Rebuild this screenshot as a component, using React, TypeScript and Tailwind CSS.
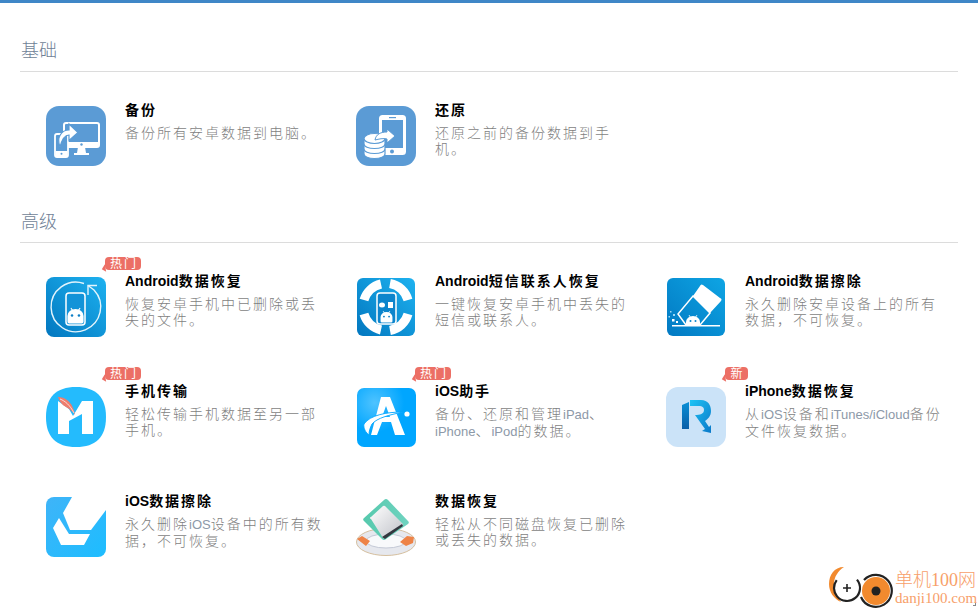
import React from "react";

const STACK = "font-['Liberation_Sans','Noto_Sans_CJK_SC',sans-serif]";

function Mixed({ text, latin, cjk }: { text: string; latin: string; cjk: string }) {
  const parts = text.match(/[A-Za-z/]+|[^A-Za-z/]+/g) ?? [];
  return (
    <>
      {parts.map((p, i) =>
        /^[A-Za-z/]/.test(p) ? (
          <span key={i} className={latin}>{p}</span>
        ) : (
          <span key={i} className={cjk}>{p}</span>
        )
      )}
    </>
  );
}

function Robot({ x, y, s = 1, eye = "#0d7fc6" }: { x: number; y: number; s?: number; eye?: string }) {
  return (
    <g transform={`translate(${x} ${y}) scale(${s})`} fill="#fff">
      <path d="M-7 0a7 6 0 0 1 14 0v5a1.500 1.500 0 0 1-1.500 1.500h-11A1.500 1.500 0 0 1-7 5z" />
      <path d="M-4-7l2 3M4-7l-2 3" stroke="#fff" strokeWidth="0.900" />
      <circle cx="-3" cy="-0.500" r="1.100" fill={eye} />
      <circle cx="3" cy="-0.500" r="1.100" fill={eye} />
    </g>
  );
}

const BackupIcon = () => (
  <svg width="60" height="60" viewBox="0 0 60 60">
    <rect width="60" height="60" rx="13" fill="#5b9bd5" />
    <rect x="18" y="17" width="35" height="24" rx="2" fill="none" stroke="#fff" strokeWidth="2" />
    <path d="M18 36h35v3a2 2 0 0 1-2 2H20a2 2 0 0 1-2-2z" fill="#fff" />
    <circle cx="35.500" cy="38.500" r="1.200" fill="#5b9bd5" />
    <path d="M32 41h7l1 6h3v2H28v-2h3z" fill="#fff" />
    <rect x="9" y="28" width="13" height="23" rx="2" fill="#5b9bd5" stroke="#fff" strokeWidth="1.800" />
    <path d="M9.500 45h12v4a1.500 1.500 0 0 1-1.500 1.500h-9A1.500 1.500 0 0 1 9.500 49z" fill="#fff" />
    <circle cx="15.500" cy="47.800" r="1" fill="#5b9bd5" />
    <path d="M14 41c-4-10 2-17 9-17v-6l9 8.500-9 8v-5.500c-4 0-7 4-9 12z" fill="#fff" stroke="#5b9bd5" strokeWidth="1.200" />
  </svg>
);

const RestoreIcon = () => (
  <svg width="60" height="60" viewBox="0 0 60 60">
    <rect width="60" height="60" rx="13" fill="#5b9bd5" />
    <rect x="23" y="9" width="27" height="40" rx="3.500" fill="#fff" />
    <rect x="26" y="14" width="21" height="28" fill="#5b9bd5" />
    <rect x="33" y="11" width="7" height="1.200" fill="#5b9bd5" />
    <circle cx="36" cy="45.500" r="2" fill="#5b9bd5" />
    <g fill="#fff" stroke="#5b9bd5" strokeWidth="1.200">
      <path d="M8 44v4c0 2.500 4.500 4.500 10.500 4.500S29 50.500 29 48v-4z" />
      <path d="M8 38v5c0 2.500 4.500 4.500 10.500 4.500S29 45.500 29 43v-5z" />
      <path d="M8 33v5c0 2.500 4.500 4.500 10.500 4.500S29 40.500 29 38v-5z" />
      <ellipse cx="18.500" cy="32.500" rx="10.500" ry="5" />
    </g>
    <path d="M19 34c1-6 6-8 12-8v-3l8 7-8 7v-4c-4-1-8 0-12 1z" fill="#fff" stroke="#5b9bd5" strokeWidth="1" />
  </svg>
);

const AndroidRecIcon = () => (
  <svg width="60" height="60" viewBox="0 0 60 60">
    <defs>
      <linearGradient id="ga" x1="1" y1="0" x2="0" y2="1">
        <stop offset="0" stopColor="#1eb2f0" />
        <stop offset="1" stopColor="#0277bf" />
      </linearGradient>
    </defs>
    <rect width="60" height="60" rx="8" fill="url(#ga)" />
    <path d="M38 6.500A24.800 24.800 0 1 0 48 13L42 8.500" fill="none" stroke="#e3f4fc" strokeWidth="1.400" />
    <path d="M42 18V8.500H51" fill="none" stroke="#e3f4fc" strokeWidth="1.400" />
    <rect x="20" y="16" width="19" height="32" rx="3" fill="#1293d8" stroke="#fff" strokeWidth="1.500" />
    <Robot x={29.500} y={39} s={1.150} />
  </svg>
);

const AndroidSmsIcon = () => (
  <svg width="58" height="58" viewBox="0 0 58 58">
    <defs>
      <linearGradient id="gb" x1="1" y1="0" x2="0" y2="1">
        <stop offset="0" stopColor="#1eb2f0" />
        <stop offset="1" stopColor="#0277bf" />
      </linearGradient>
    </defs>
    <rect width="58" height="58" rx="6" fill="url(#gb)" />
    <g fill="none" stroke="#fff" strokeWidth="9">
      <path d="M7 22A23 23 0 0 1 24 6" />
      <path d="M33 5.500A23 23 0 0 1 51 22" />
      <path d="M51 36A23 23 0 0 1 33 52.500" />
      <path d="M24 52A23 23 0 0 1 7 36" />
    </g>
    <rect x="20" y="15" width="19" height="31" rx="3" fill="#0d85cc" stroke="#fff" strokeWidth="1.500" />
    <ellipse cx="25" cy="27" rx="3" ry="2.500" fill="#fff" />
    <rect x="31" y="24" width="5" height="6" fill="#fff" />
    <Robot x={29.500} y={39} s={0.850} />
  </svg>
);

const EraserIcon = () => (
  <svg width="58" height="58" viewBox="0 0 58 58">
    <defs>
      <linearGradient id="gc" x1="1" y1="0" x2="0" y2="1">
        <stop offset="0" stopColor="#0ea5e4" />
        <stop offset="1" stopColor="#0279c2" />
      </linearGradient>
    </defs>
    <rect width="58" height="58" rx="6" fill="url(#gc)" />
    <path d="M26 18L33 8a2 2 0 0 1 3-1l17 13a2 2 0 0 1 1 3L43 35z" fill="#fff" />
    <path d="M26 18L43 35 33 47H19L11 36z" fill="none" stroke="#fff" strokeWidth="1.500" />
    <rect x="5" y="47" width="48" height="1.500" fill="#fff" />
    <path d="M19 47v-3a7 6 0 0 1 14 0v3z" fill="#fff" />
    <path d="M22 37l1.500 2.500M30 37l-1.500 2.500" stroke="#fff" strokeWidth="0.800" />
    <circle cx="23.500" cy="43" r="1" fill="#0a86cc" />
    <circle cx="28.500" cy="43" r="1" fill="#0a86cc" />
    <g fill="#9fd8f4">
      <rect x="3" y="33" width="1.500" height="1.500" />
      <rect x="6" y="36" width="2" height="2" />
      <rect x="5" y="41" width="2.500" height="2.500" fill="#fff" />
      <rect x="9" y="43" width="2" height="2" fill="#fff" />
      <rect x="1.500" y="38" width="1.500" height="1.500" />
    </g>
  </svg>
);

const TransferIcon = () => (
  <svg width="60" height="60" viewBox="0 0 60 60">
    <path d="M30 0C50 0 60 10 60 30S50 60 30 60 0 50 0 30 10 0 30 0z" fill="#24bbfd" />
    <path d="M12 14L23 22 27 29 36 14H47V47H36V27L23 34V47H12z" fill="#fff" />
    <path d="M12 10c6 0 15 4 17 18-2-3-5-6-9-8-4-2-7-6-8-10z" fill="#ee7d6e" />
    <path d="M14 12c5 2 10 6 14 14" fill="none" stroke="#fff" strokeWidth="0.700" />
  </svg>
);

const AssistantIcon = () => (
  <svg width="59" height="59" viewBox="0 0 59 59">
    <defs>
      <radialGradient id="gd" cx="0.300" cy="0.250" r="0.500">
        <stop offset="0" stopColor="#4fc3ff" />
        <stop offset="1" stopColor="#00a6ff" />
      </radialGradient>
    </defs>
    <rect width="59" height="59" rx="7" fill="url(#gd)" />
    <path d="M24 9H33L48 47H38L34 34H25L20 47H14z" fill="#fff" />
    <path d="M29 18L33 29H25z" fill="#1fb0ff" />
    <path d="M7 36C13 27 30 24 46 24 32 27 20 30 15 36 13 40 12 43 12 47 9 45 6 40 7 36z" fill="#fff" stroke="#00a6ff" strokeWidth="0.900" />
    <circle cx="50" cy="26" r="2.600" fill="#fff" />
  </svg>
);

const RIcon = () => (
  <svg width="60" height="60" viewBox="0 0 60 60">
    <defs>
      <linearGradient id="ge" x1="0" y1="0" x2="1" y2="1">
        <stop offset="0" stopColor="#1ec4f5" />
        <stop offset="1" stopColor="#0b79c9" />
      </linearGradient>
      <linearGradient id="gf" x1="0" y1="0" x2="0" y2="1">
        <stop offset="0" stopColor="#0a8fd6" />
        <stop offset="1" stopColor="#0a5fa8" />
      </linearGradient>
    </defs>
    <rect width="60" height="60" rx="12" fill="#cbe3f8" />
    <path d="M16 18l7-3v27h-7z" fill="url(#gf)" />
    <path d="M24 13h11c7 0 10 5 10 11 0 5-3 8-6 10l4 6 2-2 0 8-9-2 3-2-10-14c5 0 9-1 9-5 0-3-2-4-5-4h-9z" fill="url(#ge)" />
  </svg>
);

const IosEraseIcon = () => (
  <svg width="60" height="60" viewBox="0 0 60 60">
    <defs>
      <linearGradient id="gg" x1="0" y1="0" x2="1" y2="1">
        <stop offset="0" stopColor="#3fb4f8" />
        <stop offset="1" stopColor="#1dbdff" />
      </linearGradient>
    </defs>
    <rect width="60" height="60" rx="8" fill="url(#gg)" />
    <path d="M26 0H60V13L45 33H24L17 16z" fill="#fff" />
    <path d="M13 21L7 31 15 48H38L44 37H23z" fill="#fff" />
  </svg>
);

const LifebuoyIcon = () => (
  <svg width="60" height="60" viewBox="0 0 60 60">
    <defs>
      <linearGradient id="gh" x1="0" y1="0" x2="1" y2="1">
        <stop offset="0" stopColor="#fff" />
        <stop offset="1" stopColor="#bfc1c8" />
      </linearGradient>
      <linearGradient id="gi" x1="0" y1="0" x2="1" y2="0">
        <stop offset="0" stopColor="#56c9ad" />
        <stop offset="1" stopColor="#6fd3c0" />
      </linearGradient>
    </defs>
    <ellipse cx="30" cy="45" rx="29.500" ry="13.500" fill="#e6e8ee" stroke="#d5bf9f" strokeWidth="1" />
    <ellipse cx="30" cy="44" rx="20" ry="7" fill="#f8f9fb" stroke="#c4c9d6" />
    <path d="M1 42l5-3 8 5-4 5zM44 45l7-6 7 1-1 6-7 3z" fill="#ee8347" />
    <path d="M28 3a3 3 0 0 1 4 0L52 24a2 2 0 0 1 0 3L30 42a3 3 0 0 1-4 0L8 24a2 2 0 0 1 0-3z" fill="url(#gi)" />
    <path d="M27 9a2 2 0 0 1 2 0L47 27a1 1 0 0 1 0 1L29 41a2 2 0 0 1-2 0L15 22a1 1 0 0 1 0-2z" fill="url(#gh)" />
    <path d="M26 40l20-13 1 2-18 13z" fill="#33373f" />
  </svg>
);

const Badge = ({ label, wide }: { label: string; wide: boolean }) => (
  <span className={`absolute left-[59px] -top-[20px] h-[13px] ${wide ? "w-[36px]" : "w-[23px]"} rounded-[4px] bg-[#ec6f65] pl-[2px] text-center text-[12px] leading-[14px] tracking-[2px] text-white`}>
    {label}
    <span className="absolute -left-[2px] top-[8px] h-0 w-0 rotate-[30deg] border-l-[5px] border-t-[6px] border-l-[#ec6f65] border-t-transparent" />
  </span>
);

type Item = { icon: React.ReactNode; title: string; desc: React.ReactNode; badge?: string; iconClass?: string };

function Card({ item }: { item: Item }) {
  return (
    <div className="relative flex h-[60px] items-start">
      {item.badge && <Badge label={item.badge} wide={item.badge.length > 1} />}
      <div className={`flex h-[60px] w-[60px] shrink-0 items-center justify-center ${item.iconClass ?? ""}`}>{item.icon}</div>
      <div className="-mt-[4px] ml-[19px] w-[200px]">
        <h3 className="whitespace-nowrap text-[14px] font-bold leading-[17px] text-black">
          <Mixed text={item.title} latin="tracking-normal" cjk="tracking-[2px]" />
        </h3>
        <p className="mt-[6px] text-[14px] font-light leading-[16px] text-[#7f7f7f]">{item.desc}</p>
      </div>
    </div>
  );
}

const D = ({ t }: { t: string }) => <Mixed text={t} latin="text-[13px] tracking-normal text-[#8d99a8]" cjk="tracking-[2px]" />;

const Lines = ({ a, b }: { a: string; b: string }) => (
  <>
    <D t={a} />
    <br />
    <D t={b} />
  </>
);

const basic: Item[] = [
  { icon: <BackupIcon />, title: "备份", desc: <D t="备份所有安卓数据到电脑。" /> },
  { icon: <RestoreIcon />, title: "还原", desc: <Lines a="还原之前的备份数据到手" b="机。" /> },
];

const advanced: Item[] = [
  { icon: <AndroidRecIcon />, title: "Android数据恢复", badge: "热门", desc: <Lines a="恢复安卓手机中已删除或丢" b="失的文件。" /> },
  { icon: <AndroidSmsIcon />, title: "Android短信联系人恢复", desc: <Lines a="一键恢复安卓手机中丢失的" b="短信或联系人。" /> },
  { icon: <EraserIcon />, title: "Android数据擦除", desc: <Lines a="永久删除安卓设备上的所有" b="数据，不可恢复。" /> },
  { icon: <TransferIcon />, title: "手机传输", badge: "热门", desc: <Lines a="轻松传输手机数据至另一部" b="手机。" /> },
  { icon: <AssistantIcon />, title: "iOS助手", badge: "热门", desc: <Lines a="备份、还原和管理iPad、" b="iPhone、iPod的数据。" />, iconClass: "pl-[1px]" },
  { icon: <RIcon />, title: "iPhone数据恢复", badge: "新", desc: <Lines a="从iOS设备和iTunes/iCloud备份" b="文件恢复数据。" /> },
  { icon: <IosEraseIcon />, title: "iOS数据擦除", desc: <Lines a="永久删除iOS设备中的所有数" b="据，不可恢复。" /> },
  { icon: <LifebuoyIcon />, title: "数据恢复", desc: <Lines a="轻松从不同磁盘恢复已删除" b="或丢失的数据。" /> },
];

function Section({ title, items, className }: { title: string; items: Item[]; className: string }) {
  return (
    <section className={className}>
      <h2 className="border-b border-[#dcdcdc] pb-[8px] pl-px text-[18px] font-light leading-[24px] text-[#6f7f96]">{title}</h2>
      <div className="grid grid-cols-[310px_310px_310px] gap-y-[50px] pl-[26px] pt-[34px]">
        {items.map((it) => (
          <Card key={it.title} item={it} />
        ))}
      </div>
    </section>
  );
}

export default function App() {
  return (
    <div className={`relative h-[609px] w-[978px] overflow-hidden bg-white ${STACK}`}>
      <div className="h-[3px] bg-[#3f87c7]" />
      <div className="px-5">
        <Section title="基础" items={basic} className="pt-[36px]" />
        <Section title="高级" items={advanced} className="pt-[44px]" />
      </div>
      <div className="absolute bottom-0 right-0 flex h-[49px] w-[158px] items-start">
        <svg width="75" height="49" viewBox="0 0 75 49" className="shrink-0">
          <path d="M24 7C14 7 9 15 9 24c0 8 5 15 12 18-4-5-7-11-7-18 0-7 4-13 10-17z" fill="#f28a2e" />
          <circle cx="27" cy="28" r="13" fill="none" stroke="#222" strokeWidth="2.200" strokeDasharray="58 24" transform="rotate(-40 27 28)" />
          <path d="M27 24v8M23 28h8" stroke="#222" strokeWidth="1.600" />
          <circle cx="56" cy="31" r="14" fill="#f28a2e" />
          <path d="M44 20a16 16 0 1 1-3 17" fill="none" stroke="#222" strokeWidth="2.200" />
          <circle cx="56" cy="31" r="4.500" fill="#222" />
        </svg>
        <div className="flex flex-col items-start pt-[9px] font-['Liberation_Serif','Noto_Sans_CJK_SC',serif] text-[#f7a06a]">
          <span className="text-[18px] font-light leading-[22px]">单机100网</span>
          <span className="text-[15px] leading-[15px]">danji100.com</span>
        </div>
        <span className="absolute bottom-[3px] right-[2px] h-[3px] w-[3px] border-b border-r border-[#888]" />
      </div>
    </div>
  );
}
